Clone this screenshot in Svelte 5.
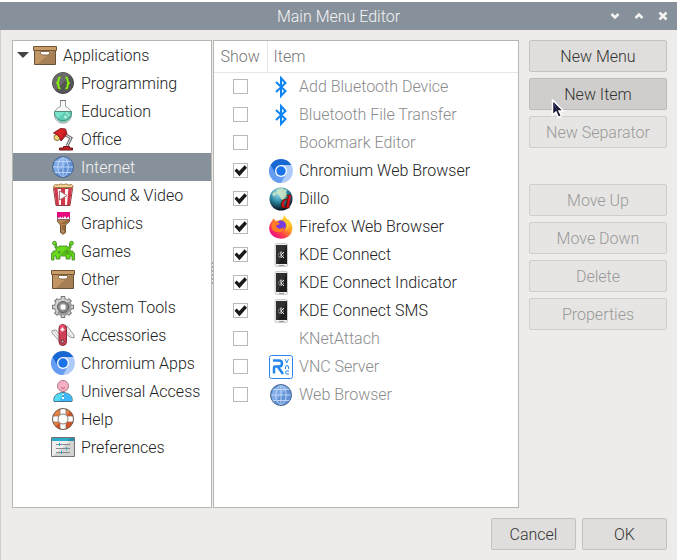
<script lang="ts">
  interface MenuItem {
    label: string;
    icon: string;
    show: boolean;
  }

  const menus = [
    { label: 'Programming', icon: 'programming' },
    { label: 'Education', icon: 'education' },
    { label: 'Office', icon: 'office' },
    { label: 'Internet', icon: 'globe' },
    { label: 'Sound & Video', icon: 'video' },
    { label: 'Graphics', icon: 'graphics' },
    { label: 'Games', icon: 'games' },
    { label: 'Other', icon: 'box' },
    { label: 'System Tools', icon: 'gear' },
    { label: 'Accessories', icon: 'knife' },
    { label: 'Chromium Apps', icon: 'chromium' },
    { label: 'Universal Access', icon: 'person' },
    { label: 'Help', icon: 'help' },
    { label: 'Preferences', icon: 'preferences' },
  ];

  let items: MenuItem[] = $state([
    { label: 'Add Bluetooth Device', icon: 'bluetooth', show: false },
    { label: 'Bluetooth File Transfer', icon: 'bluetooth', show: false },
    { label: 'Bookmark Editor', icon: '', show: false },
    { label: 'Chromium Web Browser', icon: 'chromium', show: true },
    { label: 'Dillo', icon: 'dillo', show: true },
    { label: 'Firefox Web Browser', icon: 'firefox', show: true },
    { label: 'KDE Connect', icon: 'phone', show: true },
    { label: 'KDE Connect Indicator', icon: 'phone', show: true },
    { label: 'KDE Connect SMS', icon: 'phone', show: true },
    { label: 'KNetAttach', icon: '', show: false },
    { label: 'VNC Server', icon: 'vnc', show: false },
    { label: 'Web Browser', icon: 'globe', show: false },
  ]);

  let selected = $state('Internet');
  let open = $state(true);
</script>

{#snippet icon(name: string)}
  <svg class="icon" width="24" height="24" viewBox="0 0 24 24" fill="none" aria-hidden="true">
    {#if name === 'box'}
      <path d="M1.5 7.5h21V21.5h-21z" fill="#a77f57" stroke="#665039" />
      <path d="M2 8h17L5 21H2z" fill="#c29565" />
      <path d="M.5 3.5h23v4H.5z" fill="#c99d68" stroke="#72563a" />
      <path d="M7.5 8.5h9v2l-1.500 1.500h-6l-1.500-1.500z" fill="#fff" stroke="#8b6b4a" />
    {:else if name === 'programming'}
      <circle cx="12" cy="12" r="10.500" fill="#555" stroke="#444" />
      <path d="M4.600 19.400A10.400 10.400 0 0 1 19.400 4.600z" fill="#6a6a6a" />
      <path d="M9.500 6.500c-2 0-2 .8-2 2.500 0 2-.5 3-2.200 3 1.700 0 2.200 1 2.200 3 0 1.700 0 2.500 2 2.500M14.500 6.500c2 0 2 .8 2 2.500 0 2 .5 3 2.200 3-1.700 0-2.200 1-2.200 3 0 1.700 0 2.500-2 2.500" stroke="#87f00c" stroke-width="2" />
    {:else if name === 'education'}
      <path d="M9.500 2v5.500a8.500 8.500 0 1 0 5 0V2" fill="#f6f7f7" stroke="#999" />
      <path d="M3.500 12.500h17a8.600 8.600 0 1 1-17 0z" fill="#78e3cb" />
      <path d="M20.500 12.500a8.600 8.600 0 0 1-14.500 8l8.500-8z" fill="#60cdb3" />
      <path d="M3.300 13a8.700 8.700 0 1 0 17.400 0M3.300 12.500h17.400" stroke="#528c80" />
      <path d="M9 1.500h6" stroke="#777" />
      <circle cx="14.500" cy="18" r="1.500" fill="#b4f0e3" />
      <circle cx="17.500" cy="16" r="1" fill="#b4f0e3" />
      <circle cx="16" cy="14" r=".8" fill="#e5fff9" />
    {:else if name === 'office'}
      <circle cx="6" cy="10.500" r="3" fill="#f6dc75" stroke="#8d6c46" />
      <path d="m13 7 7 4-4 8" stroke="#666" stroke-width="3" />
      <path d="m13 7 7 4-4 8" stroke="#eee" />
      <path d="m2.500 6 7-4.500 5 .5 1.500 5-6 7q-1.500-6-7.500-8z" fill="#da2525" stroke="#811d1d" />
      <path d="m9.500 12 5-9 1 4-5 6z" fill="#b91c25" />
      <path d="M12.500 19.500h6v1.500h3v2h-13v-2h4z" fill="#bf2026" stroke="#761818" />
    {:else if name === 'globe'}
      <circle cx="12" cy="12" r="10.500" fill="#6292d5" />
      <path d="M4.700 19.300A10.400 10.400 0 0 1 19.300 4.700z" fill="#80abe7" />
      <path d="M12 1.500v21M1.500 12h21M3 6.500h18M3 17.500h18M12 1.500c-7 5-7 16 0 21 7-5 7-16 0-21" stroke="#c4daf8" stroke-width=".9" />
      <circle cx="12" cy="12" r="10.500" stroke="#48678f" />
    {:else if name === 'video'}
      <path d="m2.500 5.500 2.500 17h14l2.500-17z" fill="#fff5ee" stroke="#8b413f" />
      <path d="m3 5 2.200 17H8L6.500 5zM10 5h4v17h-4zM17.500 5 16 22h2.800L21 5z" fill="#d1374c" />
      <path d="M2.500 4.500V3l2-1.500 3 .5 2-1 3 .5 3-.5 2 1 3-.5 1.500 1.500v1.500z" fill="#f9d690" stroke="#a17d52" />
      <path d="m8.500 8 7.500 4.500L8.500 17z" fill="#fff" stroke="#9e777a" />
    {:else if name === 'graphics'}
      <path d="M6.500 7.500h12v3l-4 3.500v7.500l-2 1.500h-1l-2-1.500V14l-3-3.500z" fill="#b8854e" stroke="#705333" />
      <path d="M14 14h-3v7l2 1 1-1zM9 13l9-5v2l-4 3z" fill="#94683c" />
      <path d="M6.500 1.500h12v7h-12z" fill="#f7f2ef" stroke="#85647a" />
      <path d="M6 1h13v6l-1.500-1v-1l-2 2.500-1-2H13v2l-1.500-2-1 2-1-2-1.500 1.500-2-1.500z" fill="#e5087f" />
      <path d="M12 19.500v1" stroke="#fff" />
    {:else if name === 'games'}
      <path d="M4 5h1.500v3H8V7h8v1h2.500V5H20v4h-1v3h3v2h1.500v7H21v-4h-2v3h-4v-3H9v3H5v-3H3v4H.5v-7H2v-2h3V9H4z" fill="#68d91c" stroke="#3e851e" stroke-width=".8" />
      <path d="m9 16 8-8v3l3 2 1 3h-4z" fill="#55bc13" />
      <circle cx="3.500" cy="4.200" r="1.900" fill="#6edc26" stroke="#3e851e" stroke-width=".8" />
      <circle cx="20.500" cy="4.200" r="1.900" fill="#6edc26" stroke="#3e851e" stroke-width=".8" />
      <path d="M7.500 12.500H9V14H7.500zM15 12.500h1.500V14H15z" fill="#fff" stroke="#448926" />
    {:else if name === 'gear'}
      <path d="M12 1v22M1 12h22M4.500 4.500l15 15m0-15-15 15" stroke="#777" stroke-width="4.500" />
      <circle cx="12" cy="12" r="8.500" fill="#d0d0d0" stroke="#808080" />
      <path d="M12 2v20M2 12h20M5.300 5.300l13.400 13.400m0-13.400L5.300 18.700" stroke="#cfcfcf" stroke-width="2.700" />
      <path d="M18 6a8.500 8.500 0 0 1-12 12z" fill="#999" />
      <circle cx="12" cy="12" r="5.500" fill="#898989" stroke="#5e5e5e" />
      <circle cx="12" cy="12" r="3" fill="#fff" stroke="#bbb" />
    {:else if name === 'knife'}
      <path d="m10 20-9-10V7.500l4-.5 8 9zM11 7l5-4 7 9v3l-4-1-7-6z" fill="#eee" stroke="#999" />
      <path d="m3 8 6 8m5-10 6 7" stroke="#ccc" />
      <rect x="8" y="1.500" width="7.500" height="21" rx="3.750" fill="#cf3f55" stroke="#842e3c" />
      <path d="M9 2h5l-5 10z" fill="#f04e6c" />
      <path d="M11.500 4.500v4M9.500 6.500h4" stroke="#fff" stroke-width="1.500" />
      <circle cx="11.500" cy="18.500" r="1.500" fill="#bbb" stroke="#742b36" />
    {:else if name === 'chromium'}
      <circle cx="12" cy="12" r="12" fill="#afcbfa" />
      <path d="M12 12 1.600 6A12 12 0 0 0 12 24l5-9z" fill="#659df5" />
      <path d="M1.600 6a12 12 0 0 1 20.800 0H12l-5.200 9z" fill="#1967d2" />
      <circle cx="12" cy="12" r="6" fill="#fff" />
      <circle cx="12" cy="12" r="4.700" fill="#1a73e8" />
    {:else if name === 'person'}
      <path d="M3 22.500c-1-5 2-8.500 9-9 7 .5 10 4 9 9z" fill="#55dcf5" stroke="#48758c" />
      <path d="M13 14c6 1 8 3 7.500 8H8z" fill="#3eb8fa" />
      <circle cx="12" cy="7" r="5.500" fill="#f6afc3" stroke="#b27b8c" />
      <path d="M10 8.500q2 2 4 0" stroke="#b7687b" />
      <path d="M12 15v1m0 2v2" stroke="#fff" stroke-width="2" />
      <path d="M11 17h2" stroke="#53839c" />
    {:else if name === 'help'}
      <circle cx="12" cy="12" r="7.700" stroke="#e5823f" stroke-width="5.500" />
      <path d="M19.500 4.500A10.500 10.500 0 0 1 4.500 19.500l4-4a5 5 0 0 0 7-7z" fill="#d65022" />
      <path d="M9 1.500h6v6l1.500 1.500h6v6h-6L15 16.500v6H9v-6L7.500 15h-6V9h6L9 7.500z" fill="#fff" />
      <circle cx="12" cy="12" r="10.500" stroke="#6d5b50" />
      <circle cx="12" cy="12" r="5" fill="#fff" stroke="#8b8075" />
      <path d="M9 1.500V8m6-6.500V8M9 16v6.500m6-6.500v6.500M1.500 9H8m-6.500 6H8m8-6h6.500M16 15h6.500" stroke="#7e6a60" stroke-width=".7" />
    {:else if name === 'preferences'}
      <path d="M.5 2.500h23v19H.5z" fill="#d2d2d2" stroke="#737373" />
      <path d="M1 6h18L2 21H1z" fill="#eee" />
      <path d="M1 3h22v3H1z" fill="#2490aa" />
      <path d="M1 3h18l-3 3H1z" fill="#2babc8" />
      <path d="M5 9.500h14M5 13.500h14M5 17.500h14" stroke="#888" />
      <path d="M8.500 8v3m7 1v3m-5 1v3" stroke="#1bb1ce" />
    {:else if name === 'bluetooth'}
      <path d="m7 7 9.500 9-4.500 5V3l4.500 5L7 17" stroke="#0c84f5" stroke-width="2" />
    {:else if name === 'dillo'}
      <defs>
        <radialGradient id="earth" cx=".4" cy=".25" r=".75">
          <stop offset="0" stop-color="#a5e3f0" />
          <stop offset=".5" stop-color="#2d8ba5" />
          <stop offset="1" stop-color="#03101b" />
        </radialGradient>
      </defs>
      <circle cx="12" cy="12" r="11.500" fill="url(#earth)" />
      <path d="m8 2 5-1 5 2-1 3 2 3-3 1-1 3-3-1-2-4-3-2zM3 7l3-3 1 3-2 3z" fill="#d5e8c0" opacity=".8" />
      <text x="12" y="21" class="dillo-letter">d</text>
    {:else if name === 'firefox'}
      <defs>
        <linearGradient id="flame" x1=".9" y1=".1" x2=".2" y2=".9">
          <stop offset="0" stop-color="#fff044" />
          <stop offset=".4" stop-color="#ff9b20" />
          <stop offset=".75" stop-color="#ff3750" />
          <stop offset="1" stop-color="#eb1687" />
        </linearGradient>
      </defs>
      <path d="m3 6 1.500-2.500L7 6l4-1 3-1q0-3 2-4 0 3 4 5c5 5 4 11 1 15-6 6-15 4-19-1-3-5-2-9 1-13z" fill="url(#flame)" />
      <circle cx="12" cy="10.500" r="5" fill="#783bdc" />
      <path d="M4 7c3-2 5 0 7 2l-4 1.500c1 4 5 4 8 1.500 0 4-3 6-7 5-6-1-7-6-4-10z" fill="#ff7c22" />
      <path d="M14 6c5 1 5 7 2 10 3-1 5-5 3-9z" fill="#ffcd38" />
    {:else if name === 'phone'}
      <rect x="6" y=".5" width="12.500" height="23" rx="1.500" fill="#eee" stroke="#ccc" />
      <path d="M7 2h11v19H7z" fill="#1d1d1d" />
      <path d="m18 2-9 19H7V2z" fill="#303030" />
      <circle cx="12" cy="12" r="2.500" stroke="#bbb" stroke-dasharray="1.500 1" />
      <path d="M12 8.500v6m0-2.500 3-3m-3 3 3 3" stroke="#ddd" />
      <path d="M10 22.500h5" stroke="#999" />
    {:else if name === 'vnc'}
      <rect x=".5" y=".5" width="23" height="23" rx="2" fill="#fff" stroke="#2985ee" />
      <path d="M4 5.500h6q3 0 3 3t-3 3H6q-1 0-1 2v5M9 12l5 7" stroke="#2386ee" stroke-width="2.500" />
      <path d="m16 4 1.700 4L19.500 4M16.500 14v-2q0-1.500 1.500-1.500t1.500 1.500v2m.5 2h-2q-1.500 0-1.500 1.500T18 19h2" stroke="#2386ee" />
    {/if}
  </svg>
{/snippet}

<div class="window">
  <header class="titlebar">
    <h1>Main Menu Editor</h1>
    <div class="controls">
      <button aria-label="Minimise"><svg width="12" height="12" viewBox="0 0 12 12"><path d="m2.500 4 3.500 3.500L9.500 4" /></svg></button>
      <button aria-label="Maximise"><svg width="12" height="12" viewBox="0 0 12 12"><path d="M2.500 8 6 4.500 9.500 8" /></svg></button>
      <button aria-label="Close"><svg width="12" height="12" viewBox="0 0 12 12"><path d="m2.500 2.500 7 7m0-7-7 7" /></svg></button>
    </div>
  </header>

  <main>
    <div class="panes">
      <nav class="pane tree" aria-label="Menus">
        <button class="row root" aria-expanded={open} onclick={() => (open = !open)}>
          <span class="arrow"></span>
          {@render icon('box')}
          <span class="text">Applications</span>
        </button>
        {#if open}
          {#each menus as menu}
            <button
              class="row child"
              class:selected={menu.label === selected}
              onclick={() => (selected = menu.label)}
            >
              {@render icon(menu.icon)}
              <span class="text">{menu.label}</span>
            </button>
          {/each}
        {/if}
      </nav>

      <div class="handle"></div>

      <div class="pane list">
        <table>
          <thead>
            <tr>
              <th class="show">Show</th>
              <th>Item</th>
            </tr>
          </thead>
          <tbody>
            {#each items as item, i}
              <tr class:hidden={!item.show}>
                <td class="show"><input type="checkbox" id="item-{i}" bind:checked={item.show} /></td>
                <td>
                  <label for="item-{i}">
                    {@render icon(item.icon)}
                    {item.label}
                  </label>
                </td>
              </tr>
            {/each}
          </tbody>
        </table>
      </div>
    </div>

    <div class="actions">
      <div class="group">
        <button class="btn">New Menu</button>
        <button class="btn hover">
          New Item
          <svg class="pointer" width="14" height="20" viewBox="0 0 14 20" aria-hidden="true">
            <path d="M1.500 1v15l3.500-3 2.500 5.500 3-1.500-2.500-5h4.500z" fill="#17172f" stroke="#fff" stroke-width="1.500" />
            <path d="m3 5 3 6" stroke="#3b3b86" />
          </svg>
        </button>
        <button class="btn" disabled>New Separator</button>
      </div>
      <div class="group">
        <button class="btn" disabled>Move Up</button>
        <button class="btn" disabled>Move Down</button>
        <button class="btn" disabled>Delete</button>
        <button class="btn" disabled>Properties</button>
      </div>
    </div>
  </main>

  <footer>
    <button class="btn">Cancel</button>
    <button class="btn">OK</button>
  </footer>
</div>

<style>
  :global(body) {
    background: #fff;
  }

  .window {
    box-sizing: border-box;
    display: flex;
    flex-direction: column;
    min-height: 100vh;
    padding-top: 2px;
    background: linear-gradient(#fff 2px, #edecea 2px);
    font-family: Roboto, sans-serif;
    font-size: 16px;
    font-weight: 300;
    line-height: 20px;
    color: #222;
  }

  button {
    font: inherit;
    color: inherit;
  }

  .titlebar {
    display: grid;
    grid-template-columns: 1fr auto 1fr;
    align-items: center;
    height: 28px;
    padding: 0 2px;
    background: #87919b;
    color: #f4f4f4;
  }

  h1 {
    grid-column: 2;
    margin: 0;
    padding-top: 2px;
    font-size: 16px;
    font-weight: 300;
  }

  .controls {
    display: flex;
    justify-content: flex-end;
  }

  .controls button {
    display: flex;
    align-items: center;
    justify-content: center;
    width: 24px;
    height: 24px;
    padding: 0;
    border: 0;
    background: none;
  }

  .controls path {
    fill: none;
    stroke: #f4f4f4;
    stroke-width: 2.5;
  }

  main {
    flex: 1;
    display: flex;
    gap: 10px;
    padding: 10px 10px 10px 11px;
    border-left: 1px solid #cfcecd;
  }

  .panes {
    flex: 1;
    display: flex;
  }

  .pane {
    box-sizing: border-box;
    border: 1px solid #b6b6b3;
    background: #fff;
  }

  .tree {
    width: 200px;
  }

  .list {
    flex: 1;
  }

  .handle {
    align-self: center;
    width: 1px;
    height: 24px;
    background: repeating-linear-gradient(#aaa 0 2px, #edecea 2px 4px);
  }

  .row {
    display: flex;
    align-items: center;
    gap: 6px;
    width: 100%;
    height: 28px;
    padding: 0 0 0 38px;
    border: 0;
    background: none;
    white-space: nowrap;
  }

  .row.root {
    padding-left: 4px;
  }

  .row.selected {
    background: #87919b;
    color: #f4f4f4;
  }

  .text {
    padding-top: 2px;
  }

  .arrow {
    width: 12px;
    height: 6px;
    margin-right: -2px;
    background: #444;
    clip-path: polygon(0 0, 100% 0, 50% 100%);
  }

  .icon {
    flex-shrink: 0;
    overflow: visible;
  }

  .dillo-letter {
    font: italic bold 19px "Liberation Serif", serif;
    fill: #e01212;
    stroke: #5c0505;
    stroke-width: 0.5px;
  }

  table {
    width: 100%;
    border-collapse: collapse;
  }

  th {
    box-sizing: border-box;
    height: 31px;
    padding: 2px 6px 0;
    border-bottom: 1px solid #e6e6e6;
    font-weight: 300;
    text-align: left;
    color: #777;
  }

  .show {
    box-sizing: border-box;
    width: 53px;
    text-align: center;
  }

  th.show {
    border-right: 1px solid #e6e6e6;
  }

  td {
    height: 28px;
    padding: 0;
  }

  td label {
    display: flex;
    align-items: center;
    gap: 6px;
    padding-left: 2px;
  }

  tr.hidden {
    color: #8b8b8b;
  }

  input {
    appearance: none;
    display: block;
    box-sizing: border-box;
    width: 15px;
    height: 15px;
    margin: 0 auto;
    border: 1px solid #b9b9b9;
    background: #fff;
  }

  input:checked::before {
    content: "";
    display: block;
    width: 13px;
    height: 13px;
    background: #1a1a1a;
    clip-path: polygon(4% 52%, 20% 34%, 40% 54%, 82% 10%, 100% 28%, 42% 94%);
  }

  .actions {
    display: flex;
    flex-direction: column;
    gap: 36px;
    width: 138px;
  }

  .group {
    display: flex;
    flex-direction: column;
    gap: 6px;
  }

  .btn {
    position: relative;
    height: 32px;
    padding: 2px 8px 0;
    border: 1px solid #c3c2c1;
    border-radius: 2px;
    background: #dfdedc;
    color: #333;
  }

  .btn.hover {
    border-color: #bcbbb9;
    background: #cfcecc;
  }

  .btn:disabled {
    border-color: #cfcecd;
    background: #e6e5e3;
    color: #999;
  }

  .pointer {
    position: absolute;
    top: 20px;
    left: 21px;
    z-index: 1;
  }

  footer {
    display: flex;
    justify-content: flex-end;
    gap: 6px;
    padding: 0 10px 10px;
    border-left: 1px solid #cfcecd;
  }

  footer .btn {
    width: 85px;
  }
</style>
